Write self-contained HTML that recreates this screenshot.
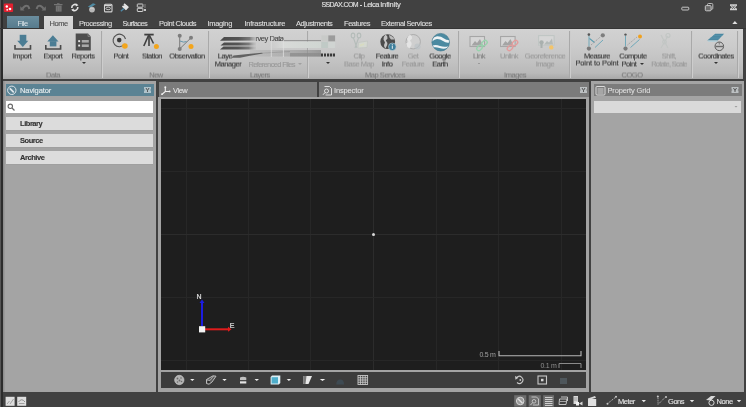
<!DOCTYPE html>
<html><head><meta charset="utf-8">
<style>
*{margin:0;padding:0;box-sizing:border-box}
html,body{width:746px;height:407px;overflow:hidden;background:#414141;font-family:"Liberation Sans",sans-serif}
body{will-change:transform}
.a{position:absolute}
.t{position:absolute;white-space:nowrap;font-size:7.5px;letter-spacing:-0.45px;line-height:8px;-webkit-text-stroke:0.12px currentColor}
.c{position:absolute;white-space:nowrap;font-size:7.5px;letter-spacing:-0.45px;line-height:8px;width:80px;text-align:center;color:#333;-webkit-text-stroke:0.12px currentColor;will-change:transform;transform:translateY(-0.5px) rotate(0.02deg)}
.tab{color:#dedede}
.rb{color:#3a3a3a;text-align:center}
.dis{color:#989898}
.gl{color:#7a7a7a}
.sep{position:absolute;top:31px;width:1px;height:47px;background:#a9a9a9;box-shadow:1px 0 0 #cdcdcd}
</style></head><body>
<!-- title bar -->
<div class="a" style="left:0;top:0;width:3px;height:407px;background:#2c2c2c"></div><div class="a" style="left:0;top:0;width:1px;height:407px;background:#555"></div>
<div class="t" style="left:321.4px;top:1px;color:#e2e2e2;letter-spacing:-0.6px;font-size:7px">SSDAX.COM</div>
<div class="a" style="left:359.5px;top:5.4px;width:2.4px;height:1px;background:#d8d8d8"></div>
<div class="t" style="left:363.5px;top:1px;color:#e2e2e2;letter-spacing:-0.5px">Leica</div>
<div class="t" style="left:380.2px;top:1px;color:#e2e2e2;letter-spacing:-0.15px">Infinity</div>

<!-- tabs -->
<div class="a" style="left:6.5px;top:16px;width:32.5px;height:13px;background:linear-gradient(#6a8d9e,#557a8c)"></div>
<div class="t tab" style="left:17.5px;top:20px;color:#dde6ea;-webkit-text-stroke:0">File</div>
<div class="a" style="left:43.5px;top:16px;width:29.5px;height:14px;background:linear-gradient(#d8d8d8,#d2d2d2);z-index:2"></div>
<div class="t" style="left:49.5px;top:20px;color:#505050;z-index:3">Home</div>
<div class="t tab" style="left:79px;top:20px">Processing</div>
<div class="t tab" style="left:122.5px;top:20px;letter-spacing:-0.62px">Surfaces</div>
<div class="t tab" style="left:159px;top:20px">Point Clouds</div>
<div class="t tab" style="left:207.5px;top:20px;letter-spacing:-0.3px">Imaging</div>
<div class="t tab" style="left:244.5px;top:20px;letter-spacing:-0.25px">Infrastructure</div>
<div class="t tab" style="left:296px;top:20px">Adjustments</div>
<div class="t tab" style="left:344px;top:20px">Features</div>
<div class="t tab" style="left:381px;top:20px">External Services</div>

<!-- ribbon -->
<div class="a" style="left:0;top:27.5px;width:746px;height:1.5px;background:#353535"></div>
<div class="a" style="left:3px;top:29px;width:740px;height:50px;background:linear-gradient(#d2d2d2 0%,#cbcbcb 35%,#c2c2c2 65%,#b9b9b9 88%,#a8a8a8 100%)"></div>


<div class="sep" style="left:101px"></div>
<div class="sep" style="left:208px"></div>
<div class="sep" style="left:307px"></div>
<div class="sep" style="left:458px"></div>
<div class="sep" style="left:569px"></div>
<div class="sep" style="left:691px"></div>
<div class="sep" style="left:737px"></div>
<div class="c gl" style="left:13px;top:71.5px">Data</div>
<div class="c gl" style="left:116px;top:71.5px">New</div>
<div class="c gl" style="left:220px;top:71.5px">Layers</div>
<div class="c gl" style="left:345px;top:71.5px">Map Services</div>
<div class="c gl" style="left:475px;top:71.5px">Images</div>
<div class="c gl" style="left:592px;top:71.5px">COGO</div>

<div class="c" style="left:-18px;top:53px">Import</div>
<div class="c" style="left:13px;top:53px">Export</div>
<div class="c" style="left:43px;top:53px">Reports</div>
<div class="c" style="left:81px;top:53px">Point</div>
<div class="c" style="left:112px;top:53px">Station</div>
<div class="c" style="left:147px;top:53px">Observation</div>
<div class="c" style="left:188px;top:61px">Manager</div>
<div class="c" style="left:185px;top:53px">Laye</div>
<div class="t" style="left:255.5px;top:35px;color:#4a4a4a">rvey Data</div>
<div class="t dis" style="left:248.5px;top:61px;letter-spacing:-0.65px">Referenced Files</div>
<div class="a" style="left:298px;top:63px;width:0;height:0;border-left:2px solid transparent;border-right:2px solid transparent;border-top:2px solid #a0a0a0"></div>
<div class="c dis" style="left:319px;top:53px">Clip</div>
<div class="c dis" style="left:319px;top:61px">Base Map</div>
<div class="c" style="left:347px;top:53px">Feature</div>
<div class="c" style="left:347px;top:61px">Info</div>
<div class="c dis" style="left:373px;top:53px">Get</div>
<div class="c dis" style="left:373px;top:61px">Feature</div>
<div class="c" style="left:400px;top:53px">Google</div>
<div class="c" style="left:400px;top:61px">Earth</div>
<div class="c" style="left:439px;top:53px;color:#7e7e7e">Link</div>
<div class="c dis" style="left:469px;top:53px">Unlink</div>
<div class="c dis" style="left:505px;top:53px">Georeference</div>
<div class="c dis" style="left:505px;top:61px">Image</div>
<div class="c" style="left:557px;top:53px">Measure</div>
<div class="c" style="left:557px;top:60px;letter-spacing:-0.1px">Point to Point</div>
<div class="c" style="left:593px;top:53px">Compute</div>
<div class="c" style="left:589px;top:61px">Point</div>
<div class="a" style="left:640px;top:63px;width:0;height:0;border-left:2px solid transparent;border-right:2px solid transparent;border-top:2px solid #333"></div>
<div class="c dis" style="left:629px;top:53px">Shift,</div>
<div class="c dis" style="left:629px;top:61px;letter-spacing:-0.72px">Rotate, Scale</div>
<div class="c" style="left:676px;top:53px">Coordinates</div>
<div class="a" style="left:81.5px;top:62px;width:0;height:0;border-left:2px solid transparent;border-right:2px solid transparent;border-top:2px solid #333"></div>
<div class="a" style="left:325.5px;top:62px;width:0;height:0;border-left:2px solid transparent;border-right:2px solid transparent;border-top:2px solid #333"></div>
<div class="a" style="left:477.5px;top:63px;width:0;height:0;border-left:1.5px solid transparent;border-right:1.5px solid transparent;border-top:1.5px solid #777"></div>
<div class="a" style="left:714px;top:62px;width:0;height:0;border-left:2px solid transparent;border-right:2px solid transparent;border-top:2px solid #333"></div>

<svg class="a" style="left:0;top:0" width="746" height="80" viewBox="0 0 746 80">
<!-- Import -->
<g fill="#4b7d94">
<rect x="19.7" y="34.8" width="6.6" height="6.3"/>
<path d="M17.2 40.8 H28.3 L22.8 47 Z"/>
<rect x="49.8" y="41.2" width="6.6" height="5.2"/>
<path d="M47.3 41.5 H58.5 L52.9 35.2 Z"/>
</g>
<g fill="none" stroke="#4a4a4a" stroke-width="1.6">
<path d="M15 45 V49 H30.5 V45"/>
<path d="M45.8 45 V49 H60.6 V45"/>
</g>
<!-- Reports -->
<path d="M75.7 33.6 H88 L90.8 36.4 V50.5 H75.7 Z" fill="#4e4e4e"/>
<path d="M88 33.6 V36.4 H90.8" fill="none" stroke="#9a9a9a" stroke-width="0.6"/>
<rect x="78.2" y="40.2" width="1.9" height="1.9" fill="#e8e8e8"/>
<rect x="78.2" y="44.6" width="1.9" height="1.9" fill="#e8e8e8"/>
<rect x="81.8" y="40" width="7" height="2.6" fill="#a8a8a8"/>
<rect x="81.8" y="44.4" width="7" height="2.6" fill="#a8a8a8"/>
<!-- Point -->
<path d="M124.6 44 A6.3 6.3 0 1 1 125.5 39" fill="none" stroke="#525252" stroke-width="1.1"/>
<circle cx="119.2" cy="40.1" r="2.3" fill="#3a3a3a"/>
<circle cx="124.9" cy="46" r="2.8" fill="#f3a51c"/>
<!-- Station -->
<g stroke="#3f3f3f" fill="none">
<path d="M144.3 34.6 H153.7" stroke-width="1.8"/>
<path d="M149 35 V46" stroke-width="1.6"/><path d="M148.5 35.5 L143.8 46" stroke-width="1.6"/><path d="M149.5 35.5 L153.5 43.5" stroke-width="1.5"/>
</g>
<circle cx="156.4" cy="46.6" r="2.5" fill="#f3a51c"/>
<!-- Observation -->
<g stroke="#7a7a7a" stroke-width="1" fill="none">
<path d="M179.7 35.7 V48.9 L191 37.8"/>
</g>
<path d="M180 41 Q184 43 186.5 41.5" stroke="#5a90a8" stroke-width="0.9" fill="none"/>
<circle cx="179.7" cy="35.7" r="2" fill="#7d7d7d"/>
<circle cx="191" cy="37.8" r="2" fill="#7d7d7d"/>
<circle cx="179.7" cy="48.9" r="2" fill="#7d7d7d"/>
<circle cx="191" cy="46.6" r="2.5" fill="#f3a51c"/>
<!-- Layers smear -->
<defs>
<linearGradient id="sm1" x1="0" x2="1"><stop offset="0" stop-color="#4a4a4a"/><stop offset="0.5" stop-color="#555"/><stop offset="0.8" stop-color="#7a7a7a"/><stop offset="1" stop-color="#b0b0b0" stop-opacity="0.3"/></linearGradient>
<linearGradient id="sm2" x1="0" x2="1"><stop offset="0" stop-color="#bcbcbc" stop-opacity="0"/><stop offset="0.3" stop-color="#9a9a9a"/><stop offset="0.8" stop-color="#8a8a8a"/><stop offset="1" stop-color="#606060"/></linearGradient>
<linearGradient id="sm3" x1="0" x2="1"><stop offset="0" stop-color="#c8c8c8"/><stop offset="0.6" stop-color="#c0c8c4"/><stop offset="1" stop-color="#d4dad8"/></linearGradient>
</defs>
<linearGradient id="sm4" x1="0" x2="1"><stop offset="0" stop-color="#b8b8b8"/><stop offset="0.5" stop-color="#a0a0a0"/><stop offset="0.85" stop-color="#8a8a8a"/><stop offset="1" stop-color="#7a7a7a"/></linearGradient>
<linearGradient id="sm5" x1="0" x2="1"><stop offset="0" stop-color="#cfcfcf" stop-opacity="0"/><stop offset="0.3" stop-color="#d8dad8"/><stop offset="1" stop-color="#d0d6d2"/></linearGradient>
<path d="M220 40.7 L224 37 H257 V40.5 Z" fill="url(#sm1)"/>
<path d="M220.5 45.4 L224 42.5 H256 V45.6 Z" fill="url(#sm1)"/>
<path d="M220 49.6 L223.5 46.6 H256 V49.6 Z" fill="url(#sm1)"/>
<rect x="250" y="50" width="71" height="6.5" fill="url(#sm4)" opacity="0.6"/><rect x="290" y="53" width="31" height="3.5" fill="#8a8a8a" opacity="0.7"/>
<path d="M231.5 57.8 L233.5 55.5 L248 54 L262 52.8 L263 53.6 L250 55.8 L240 57.8 Z" fill="#505050" opacity="0.85"/><path d="M262 52.8 L290 51 V52 L263 53.6 Z" fill="#8a8a8a" opacity="0.5"/>
<rect x="268" y="41.5" width="53" height="6.5" fill="url(#sm5)"/>
<path d="M283 40.6 H321" stroke="#7a7a7a" stroke-width="0.9" opacity="0.8"/>
<path d="M271.3 40 V57 M283.4 40 V57" stroke="#dedede" stroke-width="0.8"/>
<rect x="321.4" y="35.4" width="6.5" height="6" fill="#c8cac8"/><rect x="328.3" y="35.4" width="6.8" height="6" fill="#9c9c9c"/>
<rect x="321.4" y="41.8" width="6.5" height="6.2" fill="#c0cac6"/><rect x="328.3" y="41.8" width="6.8" height="6.2" fill="#d0d4d2"/>
<g fill="#3a3a3a"><rect x="321" y="53.5" width="2" height="3"/><rect x="324" y="53.5" width="2" height="3"/><rect x="327" y="53.5" width="2.2" height="3"/><rect x="330" y="53.5" width="2.2" height="3"/><rect x="333" y="53.5" width="2" height="3"/></g>
<!-- Clip disabled -->
<g stroke="#b4bcb9" stroke-width="1.1" fill="none">
<ellipse cx="353" cy="35.5" rx="1.8" ry="2.4"/><ellipse cx="359" cy="35.5" rx="1.8" ry="2.4"/>
<path d="M353.5 38 L357 48 M358.5 38 L355 48"/>
</g>
<path d="M358.5 42.5 L367.5 41 L367 47.5 L358 48 Z" fill="#d4d8d0" stroke="#c0c4c0" stroke-width="0.7"/>
<path d="M360 45.5 L364 44" stroke="#d8dcc0" stroke-width="1.5"/>
<!-- Feature Info globe -->
<circle cx="387.7" cy="41.7" r="7.4" fill="#4c4c4c"/>
<path d="M385.5 34.6 Q388 36 387.5 38.5 L385.8 40.5 Q387.8 42.5 387.2 45 L385.5 48.6 Q384 47.5 384 45 L385 42.5 L383.5 39.5 Q383.5 36.5 385.5 34.6 Z" fill="#c4c4c4"/>
<path d="M389 35 Q393 36 394.5 39.5 L391 39.5 L389.5 37.5 Z" fill="#bdbdbd"/>
<circle cx="392.3" cy="46.8" r="3.8" fill="#3e7f9c" stroke="#c0cfd5" stroke-width="0.6"/>
<rect x="391.8" y="45.6" width="1" height="3.2" fill="#e8f0f4"/><rect x="391.8" y="44.2" width="1" height="0.9" fill="#e8f0f4"/>
<!-- Get Feature globe disabled -->
<circle cx="413.2" cy="41.7" r="7.2" fill="#cfcfcf" stroke="#a8a8a8" stroke-width="0.9"/>
<path d="M410 34.8 Q412.5 36 412 38.5 L410 40.5 Q412 42.5 411.5 45 L409.5 48.5 Q406.5 47 406.1 43.5 L408.5 42 L407 39 Q407.5 36 410 34.8 Z" fill="#e4e4e4"/>
<circle cx="417.5" cy="46.5" r="3" fill="#b8c0c4" opacity="0.6"/>
<!-- Google Earth -->
<circle cx="440.7" cy="42.2" r="8.8" fill="#4b8aa1"/>
<path d="M432.3 39.6 Q434 36.5 437 36.2 Q441 36 444 38.5 Q447 40.5 449.3 40 L449.4 42.6 Q446 43.2 443 41 Q440 38.8 437 38.9 Q434.5 39 432.1 41.5 Z" fill="#eef3f5"/>
<path d="M432.4 45.5 Q436 44.5 440 46 Q444 47.5 448.3 46.3 L447.6 48 Q443.5 49.5 439.5 48 Q436 46.8 433 47.4 Z" fill="#eef3f5"/>
<circle cx="440.7" cy="42.2" r="8.8" fill="none" stroke="#3d7489" stroke-width="0.6"/>
<!-- Link -->
<g fill="#d6d6d6" stroke="#a6a6a6" stroke-width="1.1">
<rect x="470" y="36.5" width="14.5" height="10"/>
<rect x="500.6" y="36.5" width="14.5" height="10"/>
<rect x="538.6" y="35.6" width="15.5" height="9.6" stroke="#bfc5c3"/>
</g>
<path d="M471.5 45.5 L475 41 L477 43 L480 39 L483 45.5 Z" fill="#a4a4a4"/>
<path d="M502 45.5 L505.5 41 L507.5 43 L510.5 39 L513.5 45.5 Z" fill="#a4a4a4"/>
<path d="M544 44.5 L547 41 L549 42.5 L552 38.5 L553 44.5 Z" fill="#b4bab8"/>
<g fill="none" stroke="#98d2ac" stroke-width="1.4">
<rect x="477.5" y="45" width="4" height="6" rx="2" transform="rotate(45 479.5 48)"/>
<rect x="482.5" y="40" width="4" height="6" rx="2" transform="rotate(45 484.5 43)"/>
</g>
<g fill="none" stroke="#e29c9c" stroke-width="1.4">
<rect x="508" y="45" width="4" height="6" rx="2" transform="rotate(45 510 48)"/>
<rect x="513" y="40" width="4" height="6" rx="2" transform="rotate(45 515 43)"/>
</g>
<circle cx="541.5" cy="42.5" r="2.2" fill="#a9b0ae"/><rect x="540.5" y="44" width="2" height="4" fill="#a9b0ae"/>
<circle cx="551.3" cy="47.4" r="2.2" fill="#f3c46a"/>
<!-- Measure -->
<path d="M589 36 V46.5" stroke="#6ba6b8" stroke-width="0.95"/>
<path d="M589.5 38.5 L594.5 42.5" stroke="#5a9cb0" stroke-width="1.1"/>
<path d="M595 47.5 L603 40" stroke="#6ba6b8" stroke-width="0.95"/>
<path d="M591 45 L600.5 36.8" stroke="#909090" stroke-width="0.8" stroke-dasharray="1.2 1"/>
<circle cx="588.9" cy="34.6" r="1.3" fill="#555"/>
<circle cx="602.8" cy="35.3" r="2.1" fill="#7e7e7e"/>
<circle cx="588.9" cy="48.6" r="2.1" fill="#7a7a7a"/>
<!-- Compute -->
<path d="M625.5 36 V46.5" stroke="#6ba6b8" stroke-width="0.95"/>
<path d="M630.5 47.5 L639.5 39.5" stroke="#6ba6b8" stroke-width="0.95"/>
<path d="M627.5 45 L637 37" stroke="#909090" stroke-width="0.8" stroke-dasharray="1.2 1"/>
<circle cx="625.5" cy="34.6" r="1.2" fill="#555"/>
<circle cx="640" cy="36.6" r="2" fill="#f0a11e"/>
<circle cx="625.5" cy="48.6" r="2.1" fill="#7a7a7a"/>
<!-- Shift disabled -->
<g stroke="#c2c6c4" stroke-width="1.2" fill="none">
<path d="M661 35 L668 48 M668 36 L661 48"/>
<circle cx="668" cy="35.5" r="2"/><circle cx="664.5" cy="42" r="1.8"/>
</g>
<!-- Coordinates -->
<path d="M707.2 40.5 L715.2 33.8 H724.1 L717.7 40.5 Z" fill="#4a88a2"/>
<path d="M707.2 40.5 H717.7 L717.2 42 H708.5 Z" fill="#b8d0d8"/>
<path d="M710 38 H720 M713 35.5 H722.5" stroke="#5f9ab0" stroke-width="0.5"/>
<circle cx="719.3" cy="46.3" r="4.3" fill="#c8c8c8" stroke="#5a5a5a" stroke-width="1"/>
<path d="M715.5 46.5 H723" stroke="#6a6a6a" stroke-width="1.4"/>
<path d="M719.3 42.2 V44.5" stroke="#6a6a6a" stroke-width="0.8"/>
<!-- quick access toolbar -->
<path d="M22.5 8.8 Q25 4.5 28 6.2 Q29 7 29.3 9" fill="none" stroke="#707070" stroke-width="2.1"/>
<path d="M20.3 6.3 V10.6 H24.6 Z" fill="#707070"/>
<path d="M43.6 8.8 Q41 4.5 38 6.2 Q37 7 36.7 9" fill="none" stroke="#707070" stroke-width="2.1"/>
<path d="M45.8 6.3 V10.6 H41.5 Z" fill="#707070"/>
<rect x="55.8" y="5.6" width="5.8" height="6" fill="#747474"/>
<rect x="54" y="4" width="8.5" height="1.2" fill="#747474"/><rect x="57" y="3.2" width="2.5" height="1" fill="#747474"/>
<path d="M57.5 6.5 V11 M59.8 6.5 V11" stroke="#5e5e5e" stroke-width="0.5"/>
<path d="M71.8 8 A3.2 3.2 0 0 1 77 5.2" fill="none" stroke="#e0e0e0" stroke-width="1.6"/>
<path d="M77.8 7 A3.2 3.2 0 0 1 72.6 9.8" fill="none" stroke="#e0e0e0" stroke-width="1.6"/>
<path d="M76 3.5 L78.5 5.3 L75.8 6.5 Z M73.6 11.5 L71.1 9.7 L73.8 8.5 Z" fill="#e0e0e0"/>
<path d="M87.8 6.8 L93 3.2 L95.8 4.2 L90.5 7.8 Z" fill="#4f8aa2"/>
<circle cx="92" cy="9.6" r="2.9" fill="#b8b8b8"/>
<path d="M90 8.5 Q92 7.5 94 9" stroke="#dcdcdc" stroke-width="0.6" fill="none"/>
<rect x="104.5" y="4.3" width="7.5" height="7.6" rx="1" fill="none" stroke="#d4d4d4" stroke-width="1.1"/>
<path d="M105 5.5 H111.5" stroke="#d4d4d4" stroke-width="1.2"/>
<ellipse cx="108.2" cy="8.4" rx="2.3" ry="1.3" fill="none" stroke="#d4d4d4" stroke-width="0.9"/>
<path d="M122.5 6 L126.5 9.5 M124 4 L128 7.5" stroke="#e4e4e4" stroke-width="1.7"/>
<path d="M125.5 4.5 L128.8 7.2 L126.5 9.8 L123 6.8 Z" fill="#e4e4e4"/>
<path d="M120.3 10.8 L123.5 8 L124.5 9 L121.3 11.8 Z" fill="#4f88a6"/>
<rect x="137.3" y="4" width="5.6" height="3.2" rx="0.5" fill="none" stroke="#d0d0d0" stroke-width="1"/>
<rect x="137.3" y="8.3" width="5.6" height="3.2" rx="0.5" fill="none" stroke="#d0d0d0" stroke-width="1"/>
<g fill="#c8c8c8"><rect x="144.5" y="4.5" width="1" height="1"/><rect x="144.5" y="6.5" width="1" height="1"/><rect x="144" y="9" width="2" height="2"/></g>
<!-- logo -->
<rect x="3.8" y="3.4" width="9.3" height="8.6" rx="1" fill="#e3202f"/>
<circle cx="6.8" cy="6.5" r="1.2" fill="#fff"/><circle cx="10" cy="9" r="1.3" fill="#fff"/><circle cx="7.2" cy="9.8" r="0.9" fill="#fff"/>
<!-- window controls -->
<rect x="681.8" y="7.2" width="7" height="2.8" rx="0.8" fill="none" stroke="#c4c4c4" stroke-width="1"/>
<rect x="707.5" y="3.5" width="5.3" height="5.8" rx="1" fill="none" stroke="#bcbcbc" stroke-width="1"/>
<rect x="705.3" y="5.6" width="5.8" height="5.2" rx="1" fill="#6a6a6a" stroke="#c8c8c8" stroke-width="1"/>
<path d="M730 4.3 H737 V5.8 L735 7.3 L737 8.8 V10.3 H730 V8.8 L732 7.3 L730 5.8 Z" fill="#d0d0d0"/>
<path d="M732 5.5 L735 9 M735 5.5 L732 9" stroke="#555" stroke-width="0.8"/>
<path d="M732.3 24 L734.9 21 L737.5 24 Z" fill="#e0e0e0"/>
</svg>

<!-- navigator panel -->
<div class="a" style="left:3px;top:81px;width:153px;height:311px;background:#a4a4a4;box-shadow:inset 1.5px 0 0 #8e8e8e"></div>
<div class="a" style="left:6px;top:84px;width:147.5px;height:12.3px;background:#5b8394"></div>
<div class="t" style="left:20px;top:87px;color:#e8eef0;letter-spacing:-0.1px">Navigator</div>
<div class="a" style="left:6px;top:101px;width:147px;height:12px;background:#fff"></div>
<div class="a" style="left:6px;top:117px;width:147px;height:12.6px;background:#dcdcdc;box-shadow:0 0.6px 0 #9c9c9c"></div>
<div class="t" style="left:20px;top:120px;color:#333;font-weight:bold">Library</div>
<div class="a" style="left:6px;top:134px;width:147px;height:12.6px;background:#dcdcdc;box-shadow:0 0.6px 0 #9c9c9c"></div>
<div class="t" style="left:20px;top:137px;color:#333;font-weight:bold">Source</div>
<div class="a" style="left:6px;top:151px;width:147px;height:12.6px;background:#dcdcdc;box-shadow:0 0.6px 0 #9c9c9c"></div>
<div class="t" style="left:20px;top:154px;color:#333;font-weight:bold">Archive</div>

<!-- view frame -->
<div class="a" style="left:158px;top:97px;width:431px;height:295px;background:#a3a3a3"></div>
<div class="a" style="left:159px;top:82px;width:158px;height:15px;background:#7b7b7b"></div>
<div class="a" style="left:319px;top:82px;width:270px;height:15px;background:#7b7b7b"></div>
<div class="t" style="left:173px;top:87px;color:#e6e6e6;-webkit-text-stroke:0.05px currentColor">View</div>
<div class="t" style="left:334px;top:87px;color:#e6e6e6;letter-spacing:-0.15px;-webkit-text-stroke:0.05px currentColor">Inspector</div>
<svg class="a" style="left:161px;top:99px" width="425" height="271" viewBox="161 99 425 271">
<rect x="161" y="99" width="425" height="271" fill="#1e1e1e"/>
<path d="M186.5 99 V370" stroke="#272727" stroke-width="1"/>
<path d="M248.5 99 V370" stroke="#272727" stroke-width="1"/>
<path d="M310.5 99 V370" stroke="#272727" stroke-width="1"/>
<path d="M373.5 99 V370" stroke="#2c2c2c" stroke-width="1"/>
<path d="M436.5 99 V370" stroke="#272727" stroke-width="1"/>
<path d="M498.5 99 V370" stroke="#272727" stroke-width="1"/>
<path d="M561.5 99 V370" stroke="#272727" stroke-width="1"/>
<path d="M161 108.5 H586" stroke="#272727" stroke-width="1"/>
<path d="M161 171.5 H586" stroke="#272727" stroke-width="1"/>
<path d="M161 234.5 H586" stroke="#2c2c2c" stroke-width="1"/>
<path d="M161 297.5 H586" stroke="#272727" stroke-width="1"/>
<path d="M161 360.5 H586" stroke="#272727" stroke-width="1"/>
<circle cx="373.5" cy="234.5" r="1.5" fill="#d8d8d8"/>
<path d="M202 326 V302" stroke="#1c1ce0" stroke-width="2"/>
<path d="M199.5 303 L202 299.5 L204.5 303 Z" fill="#1c1ce0"/>
<path d="M205 329.3 H229" stroke="#e01c1c" stroke-width="2"/>
<path d="M228 326.8 L231.5 329.3 L228 331.8 Z" fill="#e01c1c"/>
<rect x="199" y="326.2" width="6.2" height="6.2" fill="#f4f4f4"/>
<text x="196.6" y="298.8" font-family="Liberation Sans" font-size="7" fill="#e0e0e0" stroke="#e0e0e0" stroke-width="0.2">N</text>
<text x="229.8" y="327.6" font-family="Liberation Sans" font-size="7" fill="#e0e0e0" stroke="#e0e0e0" stroke-width="0.2">E</text>
<path d="M499 351 V355.8 H581 V351" fill="none" stroke="#b8b8b8" stroke-width="1.1"/>
<text x="479.5" y="357.3" font-family="Liberation Sans" font-size="7" letter-spacing="-0.3" fill="#a0a0a0">0.5 m</text>
<path d="M559 368 V363.5 H581 V368" fill="none" stroke="#8a8a8a" stroke-width="1"/>
<text x="540.5" y="368.3" font-family="Liberation Sans" font-size="7" letter-spacing="-0.3" fill="#909090">0.1 m</text>
</svg>
<div class="a" style="left:161px;top:372px;width:425px;height:16px;background:#3c3c3c"></div>

<!-- property grid -->
<div class="a" style="left:591px;top:81px;width:153px;height:311px;background:#a4a4a4"></div>
<div class="a" style="left:593.5px;top:84px;width:148px;height:11.5px;background:#7c7c7c"></div>
<div class="t" style="left:607.5px;top:87px;color:#e0e0e0;letter-spacing:-0.15px;-webkit-text-stroke:0.05px currentColor">Property Grid</div>
<div class="a" style="left:594px;top:101px;width:147px;height:12px;background:#dadada"></div>


<!-- panel icons -->
<svg class="a" style="left:0;top:80px" width="746" height="327" viewBox="0 80 746 327">
<!-- navigator compass icon -->
<circle cx="11.8" cy="90.3" r="4.2" fill="none" stroke="#dfe6ea" stroke-width="1"/>
<path d="M10.3 88.8 L13.3 91.8" stroke="#dfe6ea" stroke-width="1.8" stroke-linecap="round"/>
<!-- close x icons -->
<path d="M144 87 H151 V89.2 L150 90 L151 90.8 V93 H144 V90.8 L145 90 L144 89.2 Z" fill="#dfe5e8" opacity="0.65"/>
<path d="M146 88 L147.5 90.5 L149 88 M147.5 90.5 V92" stroke="#4a4a4a" stroke-width="0.9" fill="none"/>
<path d="M580 87 H587 V89.2 L586 90 L587 90.8 V93 H580 V90.8 L581 90 L580 89.2 Z" fill="#dfe5e8" opacity="0.65"/>
<path d="M582 88 L583.5 90.5 L585 88 M583.5 90.5 V92" stroke="#4a4a4a" stroke-width="0.9" fill="none"/>
<path d="M731.5 87 H738.5 V89.2 L737.5 90 L738.5 90.8 V93 H731.5 V90.8 L732.5 90 L731.5 89.2 Z" fill="#dfe5e8" opacity="0.65"/>
<path d="M733.5 88 L735.0 90.5 L736.5 88 M735.0 90.5 V92" stroke="#4a4a4a" stroke-width="0.9" fill="none"/>
<!-- magnifier -->
<circle cx="10.3" cy="106.3" r="2.2" fill="none" stroke="#6a6a6a" stroke-width="1.1"/>
<path d="M12 108 L14.5 110.5" stroke="#6a6a6a" stroke-width="1.3"/>
<!-- view icon -->
<g stroke="#f0f0f0" stroke-width="1.1" fill="none">
<path d="M165.3 87.5 V91.5 H169.5 M165.3 91.5 L162 94.3"/>
</g>
<circle cx="165.3" cy="87.3" r="1" fill="#f0f0f0"/><circle cx="169.6" cy="91.4" r="0.9" fill="#f0f0f0"/><circle cx="162" cy="94.2" r="0.9" fill="#f0f0f0"/>
<!-- inspector icon -->
<path d="M324.5 86.5 H329.5 L331.5 88.5 V95 H325.5" fill="none" stroke="#e8e8e8" stroke-width="0.9"/>
<circle cx="326.5" cy="91" r="2" fill="none" stroke="#e8e8e8" stroke-width="0.9"/>
<path d="M325 92.5 L323 94.8" stroke="#e8e8e8" stroke-width="1"/>
<!-- property grid icon -->
<rect x="596" y="86.5" width="9" height="8.5" rx="1" fill="none" stroke="#e4e4e4" stroke-width="0.9"/>
<path d="M597.5 89 H603.5 M597.5 91 H603.5 M597.5 93 H603.5" stroke="#e4e4e4" stroke-width="0.8"/>
<path d="M734.5 106 L737.5 106 L736 107.5 Z" fill="#9a9a9a"/>
<!-- toolbar icons -->
<circle cx="179.3" cy="380" r="4.7" fill="#b4b4b4" stroke="#cfcfcf" stroke-width="0.6"/>
<g fill="#6a6a6a"><circle cx="177.5" cy="378.5" r="0.9"/><circle cx="181" cy="378" r="0.8"/><circle cx="179.5" cy="380.5" r="0.9"/><circle cx="177.5" cy="382" r="0.8"/><circle cx="181.5" cy="381.5" r="0.8"/></g>
<path d="M206.5 379.5 L213 375.8 L216 376.2 L212 382 L209 384.2 L206.5 383.5 Z" fill="#5a5a5a" stroke="#c8c8c8" stroke-width="0.9"/>
<path d="M206.8 379.8 L210 380.5 L213.5 376" fill="none" stroke="#c8c8c8" stroke-width="0.7"/>
<rect x="207.5" y="381" width="2.2" height="2.2" fill="#2a2a2a"/>
<path d="M240 377.5 Q243 376.2 246.3 377.5 V380 H240 Z" fill="#c0c0c0"/>
<rect x="240" y="380" width="6.3" height="1.3" fill="#4a4a4a"/>
<path d="M240 381.3 H246.3 V383.5 H240 Z" fill="#e4e4e4"/>
<path d="M270.6 377 L272 375.6 H280.3 V383 L278.8 384.5 H270.6 Z" fill="#dfeff4"/>
<rect x="271.6" y="377.2" width="6.4" height="6.3" fill="#4eaecb"/>
<path d="M303.5 376 H312 L308.5 384 H303.5 Z" fill="#e8e8e8"/>
<path d="M303.5 376 H306.5 L305.5 384 H303.5 Z" fill="#7a7a7a"/>
<path d="M336.2 384.4 Q336.5 379.4 340.2 379.4 Q344 379.4 344.1 384.4 Z" fill="#3e4a52"/>
<g fill="none" stroke="#c8c8c8" stroke-width="0.9">
<rect x="358" y="375.5" width="9.6" height="9"/>
<path d="M360.4 375.5 V384.5 M362.8 375.5 V384.5 M365.2 375.5 V384.5 M358 377.75 H367.6 M358 380 H367.6 M358 382.25 H367.6"/>
</g>
<g fill="#ededed">
<path d="M190.1 379 H194.5 L192.3 381 Z"/>
<path d="M222.3 379 H226.7 L224.5 381 Z"/>
<path d="M254.5 379 H259 L256.8 381 Z"/>
<path d="M286.7 379 H291.1 L288.9 381 Z"/>
<path d="M319.8 379 H325.3 L322.5 381 Z"/>
</g>
<!-- right toolbar icons -->
<path d="M516.8 377.5 A3.5 3.5 0 1 1 517 382.5" fill="none" stroke="#c8c8c8" stroke-width="1.1"/>
<path d="M515 376 L518.5 377.8 L515.5 379.8 Z" fill="#c8c8c8"/>
<circle cx="520.3" cy="380" r="0.9" fill="#c8c8c8"/>
<rect x="538" y="376" width="8.5" height="8" fill="none" stroke="#c8c8c8" stroke-width="1.1"/>
<rect x="541" y="378.8" width="2.5" height="2.5" fill="#d8d8d8"/>
<path d="M560 378 H567 V384 H560 Z" fill="#5a6870" opacity="0.6"/>
<!-- status bar left icons -->
<rect x="5.6" y="396.8" width="9" height="9" fill="#dedede"/>
<path d="M7 404 L9.5 401 M10 404 L13.5 399" stroke="#9a9a9a" stroke-width="0.9"/>
<rect x="17.2" y="396.8" width="9" height="9" fill="#dedede"/>
<path d="M18.5 402 Q21.7 397.5 25 402" fill="none" stroke="#909090" stroke-width="1"/>
<path d="M19 403.5 H24.5" stroke="#909090" stroke-width="0.8"/>
<!-- status bar right icons -->
<rect x="514.2" y="395.2" width="12.1" height="11.5" fill="#6e6e6e"/>
<rect x="528.7" y="395.2" width="12.1" height="11.5" fill="#6e6e6e"/>
<rect x="543.2" y="395.2" width="10.8" height="11.5" fill="#6e6e6e"/>
<circle cx="520.2" cy="401" r="3.8" fill="#9a9a9a" stroke="#d4d4d4" stroke-width="1"/>
<path d="M518 398.8 L522.5 403.2" stroke="#e0e0e0" stroke-width="1.4"/>
<path d="M531.5 397 H536.5 L538.5 399 V405 H533" fill="none" stroke="#c8c8c8" stroke-width="0.9"/>
<circle cx="534" cy="401.3" r="1.8" fill="none" stroke="#c8c8c8" stroke-width="0.9"/>
<path d="M532.8 402.5 L530.5 405" stroke="#c8c8c8" stroke-width="1"/>
<path d="M545 397.5 H552.5 M545 399.5 H552.5 M545 401.5 H552.5 M545 403.5 H552.5 M545 405.5 H552.5" stroke="#cfcfcf" stroke-width="1"/>
<path d="M559.5 399 H567 L566 404.5 H559 Z M561 397 H567.5 V401" fill="none" stroke="#d0d0d0" stroke-width="0.9"/>
<path d="M560 401.5 H566" stroke="#d0d0d0" stroke-width="0.7"/>
<rect x="573.5" y="396" width="4.5" height="8" fill="#d8d8d8"/>
<path d="M574 398 H577.5 M574 400 H577.5" stroke="#8a8a8a" stroke-width="0.7"/>
<rect x="576" y="402" width="3" height="3.5" fill="#f0f0f0"/>
<path d="M579 403.5 L582.5 401.5 V405.5 Z" fill="#d8d8d8"/>
<rect x="588" y="399" width="8.2" height="7" fill="#e0e0e0"/>
<path d="M587.8 398.5 L595 396 L596 397.8 L588.6 400" fill="#d8d8d8"/>
<path d="M607 404 L616.5 396.5" stroke="#c8c8c8" stroke-width="1" stroke-dasharray="1.2 1"/>
<circle cx="607.5" cy="403.8" r="1" fill="#c8c8c8"/><circle cx="616" cy="396.8" r="1" fill="#c8c8c8"/>
<path d="M658 396 V404.5 M658 404.5 L665.5 397" stroke="#c0c0c0" stroke-width="0.9" stroke-dasharray="1.2 0.9"/>
<circle cx="657.8" cy="396.5" r="1" fill="#c8c8c8"/><circle cx="666" cy="397" r="1" fill="#c8c8c8"/>
<path d="M706 400 L711 396 H715.5 L711 400.5 Z" fill="#d8d8d8"/>
<circle cx="711.5" cy="402.8" r="2.6" fill="none" stroke="#d8d8d8" stroke-width="1"/>
<g fill="#e8e8e8">
<path d="M641.6 400 H646 L643.8 402.2 Z"/>
<path d="M689.8 400 H694.2 L692 402.2 Z"/>
<path d="M736.8 400 H741.2 L739 402.2 Z"/>
</g>
</svg>
<div class="t" style="left:618px;top:397.5px;color:#e4e4e4">Meter</div>
<div class="t" style="left:668px;top:397.5px;color:#e4e4e4">Gons</div>
<div class="t" style="left:716.5px;top:397.5px;color:#e4e4e4">None</div>

</body></html>
